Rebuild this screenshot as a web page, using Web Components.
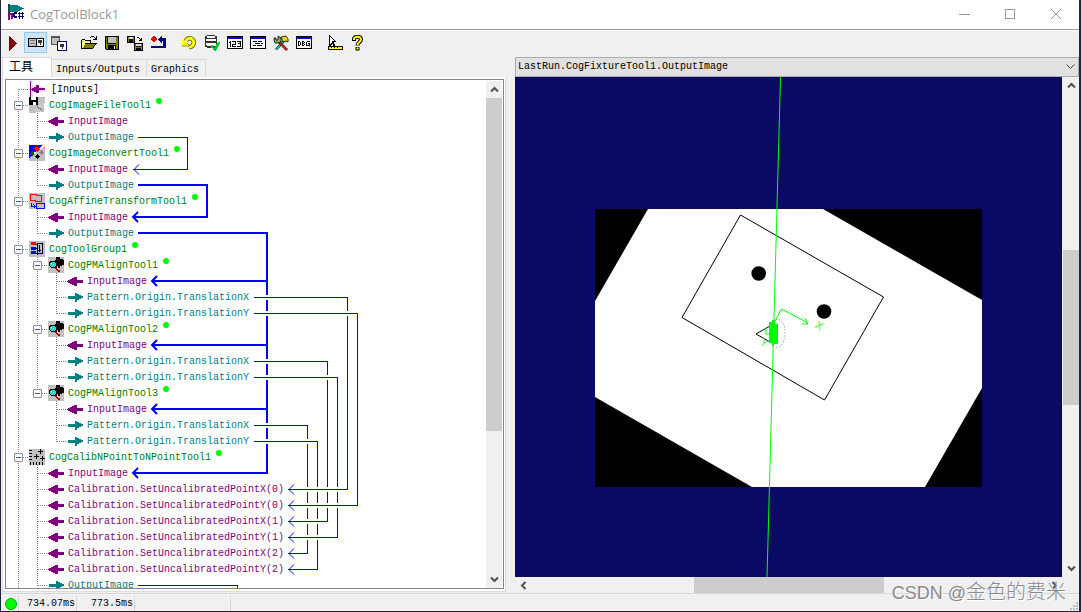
<!DOCTYPE html>
<html lang="zh-CN">
<head>
<meta charset="utf-8">
<title>CogToolBlock1</title>
<style>
html, body { margin: 0; height: 100%; }
body {
  box-sizing: border-box; padding: 0 2px 1px 1px; background: #20243c; overflow: hidden;
  color: #000; font: 10px/16px "Liberation Mono", "Noto Sans CJK SC", monospace;
}
</style>
</head>
<body>
<cog-window>
  <title-bar slot="title">CogToolBlock1</title-bar>
  <tool-bar slot="tools"></tool-bar>
  <tab-panel slot="left"><tool-tree></tool-tree></tab-panel>
  <image-display slot="right"></image-display>
  <status-bar slot="status"></status-bar>
</cog-window>
<script>
class Base extends HTMLElement {
  constructor() {
    super();
    this.attachShadow({ mode: 'open' }).innerHTML =
      `<style>:host,*{box-sizing:border-box}button{font:inherit;color:inherit;border:0;padding:0;margin:0;background:none}svg{display:block}
      ${this.css()}</style>${this.html()}`;
  }
  css() { return ''; }
  html() { return ''; }
}

const icon = (body, w = 16, h = 16) =>
  `<svg width="${w}" height="${h}" viewBox="0 0 ${w} ${h}" shape-rendering="crispEdges" aria-hidden="true">${body}</svg>`;

customElements.define('cog-window', class extends Base {
  css() { return `
    :host{display:flex;flex-direction:column;height:100%;background:#f0f0f0}
    main{flex:1;min-height:0;display:grid;grid-template-columns:504fr 564fr;grid-template-rows:minmax(0,1fr);gap:9px;padding-left:1px}`; }
  html() { return `<slot name="title"></slot><slot name="tools"></slot>
    <main><slot name="left"></slot><slot name="right"></slot></main><slot name="status"></slot>`; }
});

customElements.define('title-bar', class extends Base {
  css() { return `
    :host{display:flex;align-items:center;height:30px;flex:none;background:#fff;border-bottom:1px solid #a0a0a0;
      padding-left:7px;gap:5px;color:#999;font:13px/20px "Open Sans",sans-serif}
    h1{flex:1;font:inherit;margin:0;padding-bottom:2px}
    button{width:46px;height:28px;display:grid;place-items:center}
    .ctl{display:flex;align-self:start}
    .logo{margin-bottom:4px}`; }
  html() { return `
    <div class="logo">${icon(`<path d="M1 0h11v2h4v4h-4v3H1z" fill="#fff"/><path d="M1 1h9v1h2v1h2v1h2v1h-2v1h-2v1h-2v1H1z" fill="#008080"/>
      <path d="M0 0h2v8H0z" fill="#004f4f"/>
      <path d="M0 8h2v1h3v6H3v-4H2v5H0z" fill="#800080"/>
      <path d="M6 8h3v2H6zM5 9h2v4H5zM6 12h3v2H6zM11 8h1v7h-1zM14 8h1v7h-1zM10 9h6v1h-6zM10 12h6v1h-6z" fill="#000080"/>`, 17, 17)}</div>
    <h1><slot></slot></h1>
    <div class="ctl">
      <button aria-label="Minimize">${icon('<path d="M0 5h11v1H0z" fill="#999"/>', 11, 11)}</button>
      <button aria-label="Maximize">${icon('<path d="M.5 .5h9v9h-9z" fill="none" stroke="#999"/>', 11, 11)}</button>
      <button aria-label="Close"><svg width="11" height="11"><path d="M0 0l10 10M10 0L0 10" stroke="#999" fill="none"/></svg></button>
    </div>`; }
});

const win = b => `<path d="M0 1h16v13H0z" fill="#000"/><path d="M1 4h14v9H1z" fill="#fff"/><path d="M1 2h14v2H1z" fill="#0000c8"/>${b}`;
const T = {
  run: icon('<path d="M4 1h1v1h1v1h1v1h1v1h1v1h1v1h1v1h1v1h-1v1h-1v1H9v1H8v1H7v1H6v1H5v1H4z" fill="#800000"/>'),
  panel: icon('<path d="M0 3h16v9H0z" fill="#000"/><path d="M1 4h7v7H1z" fill="#c0c0c0"/><path d="M2 5h5v1H2zM2 8h5v1H2z" fill="#777"/><path d="M9 4h6v7H9z" fill="#fff"/><path d="M10 5h4v3h-1v2h-1V8h-2z" fill="#333"/>'),
  panels: icon('<path d="M0 1h9v9H0z" fill="#555"/><path d="M1 3h7v6H1z" fill="#c0c0c0"/><path d="M6 6h10v10H6z" fill="#000080"/><path d="M7 7h8v8H7z" fill="#fff"/><path d="M9 9h4v3h-1v2h-1v-2H9z" fill="#333"/>'),
  open: icon('<path d="M0 5h1V4h3v1h6v3H0z" fill="#000"/><path d="M1 5h3v1h5v2H1zM1 8h3v1H3v3H1z" fill="#f4f480"/><path d="M0 5h1v9H0zM0 13h12v1H0zM4 8h12v1H4z" fill="#000"/><path d="M4 9h11v1h-1v1h-1v2H2v-1h1v-2h1z" fill="#808000"/><path d="M15 9v1h-1v1h-1v2h-1v-2h1v-1h1V9zM9 2h1V1h3v1h1v1h1V1h1v4h-4V4h2V3h-1V2h-3v1H9z" fill="#000"/>'),
  save: icon('<path d="M1 1h14v14H2v-1H1z" fill="#000"/><path d="M2 2h1v7h9V2h2v12H2z" fill="#808000"/><path d="M4 2h8v6H4z" fill="#c0c0c0"/><path d="M4 10h8v4H4z" fill="#000"/><path d="M10 11h1v3h-1z" fill="#fff"/>'),
  saveAll: icon('<path d="M0 1h8v7H0zM7 8h9v8H7z" fill="#000"/><path d="M1 2h1v3h4V2h1v5H1zM8 9h1v3h5V9h1v6H8z" fill="#808000"/><path d="M2 2h4v2H2zM9 9h5v2H9z" fill="#ddd"/><path d="M2 5h4v2H2zM9 13h5v2H9z" fill="#000"/><path d="M10 2h2v1h1v1h1V3h1v3h-3V5h1V4h-1V3h-2z" fill="#000"/>'),
  reset: icon('<path d="M1 3h1V2h1V1h2v1h1v1h1v2H6v1H5v1H3V6H2V5H1z" fill="#f00"/><path d="M8 4h1V3h1V2h1V1h1v2h4v10H1v-2h12V6h-1v2h-1V7h-1V6H9V5H8z" fill="#000080"/>'),
  redo: '<svg width="16" height="16" viewBox="0 0 16 16" fill="none"><path d="M5 6C6 3 10 2 12 5S12 12 8 12" stroke="#55550a" stroke-width="4.500"/><path d="M5 6C6 3 10 2 12 5S12 12 8 12" stroke="#ff0" stroke-width="3"/><path d="M1 3v8h8z" fill="#ff0"/><path d="M1 11h8L6 8" stroke="#77770a" stroke-width=".800"/></svg>',
  db: icon('<path d="M3 0h8v1h2v11h-2v1H3v-1H1V1h2z" fill="#333"/><path d="M3 1h8v2H3zM2 4h10v2H2zM2 8h10v3H3z" fill="#fff"/><path d="M7 10h2v2h1v1h1v-2h1V9h1V8h1V7h2v2h-1v2h-1v2h-1v2h-1v1h-2v-1H9v-2H7z" fill="#0c3"/>'),
  n123: icon(win('<path d="M3 6h1v6H3zM2 7h1v1H2zM5 6h4v4H6v1h3v1H5V9h3V7H5zM10 6h4v6h-4v-1h3V9h-2V8h2V7h-3z" fill="#000"/>')),
  form: icon(win('<path d="M3 6h4v1H3zM8 6h4v1H8zM5 8h5v1H5zM11 8h2v1h-2zM3 10h3v1H3zM7 10h5v1H7z" fill="#000"/>')),
  tools: `<svg width="16" height="16" viewBox="0 0 16 16"><path d="M3 14.500L12 5" stroke="#000" stroke-width="2.500"/><path d="M3 14.500L12 5" stroke="#0cc" stroke-width="1.500"/><path d="M5 6l9 9" stroke="#300" stroke-width="2.500"/><path d="M5 6l9 9" stroke="#e22" stroke-width="1.500"/><path d="M1 5V3h2v2h2V1l3 2v4L5 8H2z" fill="#7fae6b" stroke="#000" stroke-width=".800"/><path d="M8 2l5-1 2 3v3l-2-1-3 1z" fill="#e6dc00" stroke="#000" stroke-width=".800"/></svg>`,
  dbg: icon(win('<path d="M2 6h2v1h1v3H4v1H2zM6 6h2v1h1v1H8v1h1v1H8v1H6zM11 6h3v1h-3v3h2V9h-1V8h2v3h-4V7h1z" fill="#000"/><path d="M3 7h1v3H3zM7 7h1v1H7zM7 9h1v1H7z" fill="#fff"/>')),
  pick: icon('<path d="M2 0h1v1h1v1h1v1h1v1h1v1h1v1h1v1H7v2h1v2H6V9H5v1H4v1H2z" fill="#000"/><path d="M3 2h1v1h1v1h1v1h1v1H5v2H4v1H3z" fill="#fff"/><path d="M1 11h15v4H1z" fill="#000"/><path d="M2 12h13v2H2z" fill="#ff0"/><path d="M4 12h1v1H4zM7 12h1v1H7zM10 12h1v1h-1z" fill="#000"/>'),
  help: '<svg width="16" height="16" viewBox="0 0 16 16" fill="none"><path d="M4 6V4C4 1 11 1 11 4.500C11 7 7.500 7 7.500 10.500M7.500 12v3.500" stroke="#000" stroke-width="4"/><path d="M4 5V4C4 1 11 1 11 4.500C11 7 7.500 7 7.500 10M7.500 12.500v2" stroke="#ff0" stroke-width="2"/></svg>'
};
customElements.define('tool-bar', class extends Base {
  css() { return `
    :host{display:flex;flex:none;height:27px;padding-top:1px;border-top:1px solid #fff;background:#f0f0f0}
    button{width:23px;height:21px;display:grid;place-items:center}
    .on{background:#cce4f7;box-shadow:inset 0 0 0 1px #99c9ef}
    i{width:7px}
    i:nth-of-type(n+2){width:8px}`; }
  html() {
    const names = ['run','panel','panels','','open','save','saveAll','reset','','redo','db','n123','form','tools','dbg','','pick','help'];
    return names.map(n => n ? `<button class="${n === 'panel' ? 'on' : ''}" aria-label="${n}">${T[n]}</button>` : '<i></i>').join('');
  }
});

customElements.define('tab-panel', class extends Base {
  css() { return `
    :host{display:flex;flex-direction:column;min-width:0;min-height:0}
    nav{display:flex;align-items:flex-end;height:20px;flex:none}
    button{height:18px;border:1px solid #d9d9d9;border-bottom:0;border-left-width:0;padding:2px 6px 0 4px;white-space:nowrap}
    .on{height:20px;width:50px;background:#fff;border-left-width:1px;font-size:12px;padding:0 0 0 6px;text-align:left}
    section{flex:1;min-height:0;display:flex;background:#fff;border:1px solid #dcdcdc;border-top-color:#fff;padding:1px 1px 2px 2px;margin-bottom:1px}
    ::slotted(*){flex:1}`; }
  html() { return `<nav role="tablist"><button role="tab" class="on" aria-selected="true">工具</button><button role="tab">Inputs/Outputs</button><button role="tab">Graphics</button></nav>
    <section><slot></slot></section>`; }
});

customElements.define('scroll-bar', class extends Base {
  css() { return `
    :host{display:flex;flex-direction:column;width:16px;background:#f0f0f0;flex:none}
    :host([horizontal]){flex-direction:row;width:auto;height:16px}
    button{flex:none;width:16px;height:17px;display:grid;place-items:center}
    :host([horizontal]) button{width:17px;height:16px}
    :host([horizontal]) svg{transform:rotate(-90deg)}
    .track{flex:1;display:flex;flex-direction:inherit;min-height:0}
    .before{flex:var(--before,0) 0 0}.thumb{flex:var(--size,1) 0 0;background:#cdcdcd}.after{flex:var(--after,1) 0 0}`; }
  html() {
    const ch = d => `<svg width="9" height="7" viewBox="0 0 9 7"><path d="${d}" fill="none" stroke="#505050" stroke-width="2"/></svg>`;
    return `<button aria-label="Back">${ch('M1 5.500L4.500 2L8 5.500')}</button><div class="track"><div class="before"></div><div class="thumb"></div><div class="after"></div></div><button aria-label="Forward">${ch('M1 1.500L4.500 5L8 1.500')}</button>`;
  }
});

const grey = '<path d="M0 0h16v16H0z" fill="#c0c0c0"/>';
const G = {
  in: icon('<path d="M0 8h1V7h2V6h2V5h2V4h3v3h6v3h-6v3H7v-1H5v-1H3v-1H1V9H0z" fill="#800080"/>'),
  out: icon('<path d="M1 7h7V4h2v1h2v1h2v1h2v2h-2v1h-2v1h-2v2H8v-3H1z" fill="#008080"/>'),
  inputs: icon('<path d="M1 0h3v16H1zM4 6h12v5H4z" fill="#f3d8f3"/><path d="M1 0h1v16H1zM2 8h1V7h2V6h2V4h3v3h6v2h-6v3H7v-1H5v-1H3V9H2z" fill="#800080"/>'),
  file: icon(grey + '<path d="M0 0h9v8H0z" fill="#000"/><path d="M2 0h5v3H2zM4 5h3v3H4z" fill="#fff"/><path d="M9 6h6v9H6v-4h3z" fill="#c8c8c8"/><path d="M8 8h1v2h1v1h2v1h1v1h1v-2h1v1h-1v2h-1v-1h-2v-1H9v-1H8z" fill="#888"/><path d="M15 6h1v10H7v-1h8z" fill="#fff"/>'),
  convert: icon(grey + '<path d="M0 0h13v1h-1v1h-1v1h-1v1H9v1H8v1H7v1H6v1H5v1H4v1H3v1H2v1H1v1H0z" fill="#00f"/><path d="M7 1h1v1h1v1h1v1h1v1h-1v1H9v1H8V6H7V5H6V4H5V3h1V2h1z" fill="#f00"/><path d="M3 6h1v1h1v1h1v1H5v1H4v1H3v-1H2V9H1V8h1V7h1z" fill="#006000"/><path d="M12 5h1v1h1v1h1v1h-1v1h-1v1h-1V9h-1V8h-1V7h1V6h1z" fill="#888"/><path d="M8 9h1v1h1v1h1v1h-1v1H9v1H8v-1H7v-1H6v-1h1v-1h1z" fill="#000"/><path d="M15 0h1v1h-1v1h-1v1h-1v1h-2V3h1V2h1V1h1V0zM5 7h2v2H5z" fill="#fff"/>'),
  affine: icon(grey + '<path d="M1 1h6v1h5v6H6V7H1z" fill="none" stroke="#f00"/><path d="M2.500 10v3.500H6M4.500 11.500L6.500 13.500L4.500 15.500" fill="none" stroke="#00f"/><path d="M7.500 10.500h8v5h-8z" fill="none" stroke="#00f"/>'),
  group: icon(grey + '<path d="M2 1h5v3H2z" fill="#f00"/><path d="M2 6h5v3H2zM2 10h5v3H2z" fill="#00f"/><path d="M7 3h1v1H7zM7 7h1v1H7zM7 12h1v1H7zM8 2h1v12H8zM8 2h6v11H9v-1h4V3H8zM9 9h3v1H9zM10 8h1v3h-1zM10 4h1v4h-1z" fill="#000"/>'),
  align: icon(grey + '<path d="M8 0h4v2h3v1h1v5h-2v1h-2v2h-2V9H7V3h1z" fill="#000"/><path d="M2 4h5v1h2v5H8v1H3v-1H2V9H1V5h1z" fill="#000"/><path d="M3 5h4v1h1v3H7v1H3V9H2V6h1z" fill="#3cd"/><path d="M3 6h1v1H3zM5 7h1v1H5z" fill="#fff"/><path d="M7 10h2v1h1v1h1v1h1v2h-2v-1H9v-1H8v-1H7z" fill="#a00"/><path d="M9 11h1v1h1v1h-1v-1H9z" fill="#fff"/>'),
  calib: icon(grey + '<path d="M11 0h1v2h2v1h-2v2h-1V3H9V2h2zM7 5h1v2h2v1H8v2H7V8H5V7h2zM13 7h1v2h2v1h-2v2h-1v-2h-2V9h2zM0 1h3v1H0zM0 4h3v1H0zM0 7h3v1H0zM0 10h3v1H0zM1 13h1v3H1zM4 13h1v3H4zM7 13h1v3H7zM10 13h1v3h-1zM13 13h1v3h-1z" fill="#000"/>')
};
/* One mark per indent column: v line, h line with branch, l last branch, t/e toggle with or without a line below, f first branch */
const P = 'Pattern.Origin.Translation', C = 'Calibration.SetUncalibratedPoint';
const rows = [
  ['f', 'inputs', '[Inputs]'],
  ['t', 'file', 'CogImageFileTool1'], ['vh', 'in', 'InputImage'], ['vl', 'out', 'OutputImage'],
  ['t', 'convert', 'CogImageConvertTool1'], ['vh', 'in', 'InputImage'], ['vl', 'out', 'OutputImage'],
  ['t', 'affine', 'CogAffineTransformTool1'], ['vh', 'in', 'InputImage'], ['vl', 'out', 'OutputImage'],
  ['t', 'group', 'CogToolGroup1'],
  ['vt', 'align', 'CogPMAlignTool1'], ['vvh', 'in', 'InputImage'], ['vvh', 'out', P + 'X'], ['vvl', 'out', P + 'Y'],
  ['vt', 'align', 'CogPMAlignTool2'], ['vvh', 'in', 'InputImage'], ['vvh', 'out', P + 'X'], ['vvl', 'out', P + 'Y'],
  ['ve', 'align', 'CogPMAlignTool3'], ['v h', 'in', 'InputImage'], ['v h', 'out', P + 'X'], ['v l', 'out', P + 'Y'],
  ['t', 'calib', 'CogCalibNPointToNPointTool1'], ['vh', 'in', 'InputImage'],
  ['vh', 'in', C + 'X(0)'], ['vh', 'in', C + 'Y(0)'], ['vh', 'in', C + 'X(1)'],
  ['vh', 'in', C + 'Y(1)'], ['vh', 'in', C + 'X(2)'], ['vh', 'in', C + 'Y(2)'],
  ['vl', 'out', 'OutputImage']
];
customElements.define('tool-tree', class extends Base {
  css() { return `
    :host{display:flex;min-width:0;border:1px solid #828790;background:#fff;padding-right:1px}
    .view{position:relative;flex:1;min-width:0;overflow:hidden;padding:1px 0 0 3px}
    ul{list-style:none;margin:0;padding:0}
    li{display:flex;height:16px;white-space:pre}
    .g{width:19px;height:16px;flex:none;position:relative}
    .g svg{position:absolute;inset:0}
    .g button{position:absolute;left:5px;top:4px;width:9px;height:9px;border:1px solid #919191;border-radius:1px;background:linear-gradient(#3e5cc4,#3e5cc4) center/5px 1px no-repeat #f7f7f7}
    .ic{margin-left:1px;flex:none}
    .t{margin-left:4px;line-height:18px}
    .in{color:#800080}.out{color:#008080}.tool{color:#008000}
    .inputs{margin-left:6px}
    .ok{width:6px;height:6px;border-radius:3px;background:#0f0;margin:1px 0 0 5px}
    .wires{position:absolute;left:0;top:0}
    scroll-bar{--before:0;--size:333;--after:140;margin-top:1px}`; }
  guide(m) {
    const v = (a, b) => `<path d="M9.500 ${a}V${b}" stroke="#808080" stroke-dasharray="1 1"/>`;
    const h = '<path d="M10 8.500H20" stroke="#808080" stroke-dasharray="1 1"/>';
    const s = { v: v(0, 16), h: v(0, 16) + h, l: v(0, 9) + h, f: v(8, 16) + h, t: v(0, 16) + h, e: v(0, 9) + h, ' ': '' }[m];
    return `<span class="g">${icon(s, 20, 16)}${'te'.includes(m) ? '<button aria-label="Collapse"></button>' : ''}</span>`;
  }
  html() {
    const items = rows.map(([g, k, text]) => {
      const cls = k === 'in' || k === 'out' || k === 'inputs' ? k : 'tool';
      return `<li role="treeitem">${[...g].map(m => this.guide(m)).join('')}<span class="ic">${G[k]}</span><span class="t ${cls}">${text}</span>${cls === 'tool' ? '<span class="ok"></span>' : ''}</li>`;
    }).join('');
    const links = [[297, 347, 489], [313, 357, 505], [361, 327, 521], [377, 337, 537], [425, 307, 553], [441, 317, 569]];
    const head = (x, y, w) => `<path d="M${x + 6} ${y - 5}L${x + 1} ${y}L${x + 6} ${y + 5}" stroke-width="${w}" shape-rendering="auto"/>`;
    const thin = links.map(([a, x, b]) => `<path d="M${x}.5 ${a}V${b + 1}"/>`).join('');
    const halo = links.map(([a, x, b]) => `<path stroke="#fff" stroke-width="5" d="M254 ${a}.5H${x - 3}M297 ${b}.5H${x - 3}"/>`).join('');
    const line = links.map(([a, x, b]) => `<path d="M254 ${a}.5H${x}M288 ${b}.5H${x}"/>${head(288, b + .5, 1)}`).join('');
    return `<div class="view"><ul role="tree">${items}</ul>
      <svg class="wires" width="480" height="510" viewBox="6 80 480 510" fill="none" stroke="#00f" shape-rendering="crispEdges" aria-hidden="true">
        <path d="M138 137.500H187.500V169.500H133"/>${head(133, 169.5, 1)}
        <path d="M138 185H207V217H134M138 233H267V473H134M267 281H153M267 345H153M267 409H153" stroke-width="2"/>
        ${head(132, 217, 2)}${head(132, 473, 2)}${head(151, 281, 2)}${head(151, 345, 2)}${head(151, 409, 2)}
        ${thin}${halo}${line}
        <path d="M138 585.500H237.500V590"/>
      </svg></div><scroll-bar></scroll-bar>`;
  }
});

customElements.define('image-display', class extends Base {
  css() { return `
    :host{display:grid;grid-template:20px minmax(0,1fr) 16px/minmax(0,1fr) 16px;min-width:0;min-height:0}
    label{grid-column:1/3;position:relative}
    select{appearance:none;width:100%;height:20px;border:1px solid #adadad;border-radius:0;background:#e1e1e1;color:#000;font:inherit;padding:0 2px;margin:0;display:block}
    label svg{position:absolute;right:4px;top:7px;pointer-events:none}
    .view{background:#0a0a64;overflow:hidden;display:grid;place-content:center;margin-right:1px}
    .view svg{overflow:visible}
    text{font:11px "Liberation Sans",sans-serif;fill:#3f3}
    .v{--before:156;--size:155;--after:155}
    .h{--before:162;--size:189;--after:162}`; }
  html() { return `
    <label><select aria-label="Record"><option>LastRun.CogFixtureTool1.OutputImage</option></select>
      <svg width="9" height="6"><path d="M.5 .5l4 4l4-4" fill="none" stroke="#444"/></svg></label>
    <div class="view"><svg width="547" height="500" viewBox="515 77 547 500" fill="none">
      <path d="M595 209h387v278H595z" fill="#000"/>
      <path d="M648 209H823L982 300V388L925 487H752L595 397V301z" fill="#fff"/>
      <path d="M740.500 215L883.500 297L824.500 400L682 317.500z" stroke="#000"/>
      <circle cx="758.700" cy="273.500" r="7.300" fill="#000"/><circle cx="824" cy="311.500" r="7.300" fill="#000"/>
      <path d="M770 326L756 334L770 342" stroke="#000"/>
      <path d="M776 319C783 319 786 327 785 335S781 348 775 347" stroke="#777" stroke-dasharray="1 2"/>
      <path d="M775 321L781.500 309L808 323M802 324h6l-3-6M766 328v6h4" stroke="#0f0"/>
      <path d="M769 322h3v-2h3v4h3v20h-4v2h-2v-3h-3z" fill="#0f0"/>
      <path d="M789.340 -250L753.500 1077" stroke="#0f0"/>
      <text transform="translate(814 327) rotate(30)">X</text>
      <text transform="translate(759 344) rotate(30)">Y</text>
    </svg></div>
    <scroll-bar class="v"></scroll-bar><scroll-bar class="h" horizontal></scroll-bar>`; }
});

customElements.define('status-bar', class extends Base {
  css() { return `
    :host{display:flex;flex:none;position:relative;height:18px;border-top:1px solid #d7d7d7;background:#f0f0f0;line-height:17px}
    .led{width:12px;height:12px;border-radius:6px;background:#0f0;border:1px solid #0a0;margin:4px 1px 0 4px}
    span{border-left:1px solid #d7d7d7;margin-top:2px;line-height:15px;text-align:right}
    .a{width:58px;padding-right:1px}.b{width:58px;padding-right:1px}.c{width:96px}.d{flex:1}
    .grip{align-self:end;padding:0 1px 1px 0}
    .mark{position:absolute;right:13px;bottom:6px;font:20px/24px "Liberation Sans","Noto Sans CJK SC",sans-serif;font-weight:300;color:#8a8a8a;text-shadow:1px 1px 0 #fff;white-space:nowrap}
    .mark b{font-weight:inherit;font-size:18px}`; }
  html() { return `<div class="led"></div><span class="a">734.07ms</span><span class="b">773.5ms</span><span class="c"></span><span class="d"></span>
    <div class="grip">${icon('<path d="M6 0h2v2H6zM3 3h2v2H3zM6 3h2v2H6zM0 6h2v2H0zM3 6h2v2H3zM6 6h2v2H6z" fill="#bbb"/>', 8, 8)}</div>
    <div class="mark"><b>CSDN @</b>金色的费米</div>`; }
});
</script>
</body>
</html>
